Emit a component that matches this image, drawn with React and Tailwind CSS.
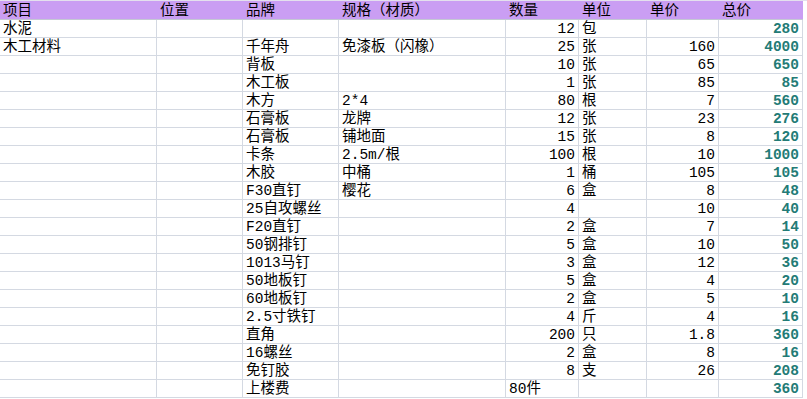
const font = { fontFamily: '"Liberation Mono", "Noto Sans CJK SC", monospace' };

const rows = [
  ["水泥", "", "", "", 12, "包", "", 280],
  ["木工材料", "", "千年舟", "免漆板（闪橡）", 25, "张", 160, 4000],
  ["", "", "背板", "", 10, "张", 65, 650],
  ["", "", "木工板", "", 1, "张", 85, 85],
  ["", "", "木方", "2*4", 80, "根", 7, 560],
  ["", "", "石膏板", "龙牌", 12, "张", 23, 276],
  ["", "", "石膏板", "铺地面", 15, "张", 8, 120],
  ["", "", "卡条", "2.5m/根", 100, "根", 10, 1000],
  ["", "", "木胶", "中桶", 1, "桶", 105, 105],
  ["", "", "F30直钉", "樱花", 6, "盒", 8, 48],
  ["", "", "25自攻螺丝", "", 4, "", 10, 40],
  ["", "", "F20直钉", "", 2, "盒", 7, 14],
  ["", "", "50钢排钉", "", 5, "盒", 10, 50],
  ["", "", "1013马钉", "", 3, "盒", 12, 36],
  ["", "", "50地板钉", "", 5, "盒", 4, 20],
  ["", "", "60地板钉", "", 2, "盒", 5, 10],
  ["", "", "2.5寸铁钉", "", 4, "斤", 4, 16],
  ["", "", "直角", "", 200, "只", 1.8, 360],
  ["", "", "16螺丝", "", 2, "盒", 8, 16],
  ["", "", "免钉胶", "", 8, "支", 26, 208],
  ["", "", "上楼费", "", "80件", "", "", 360],
];

const headers = ["项目", "位置", "品牌", "规格（材质）", "数量", "单位", "单价", "总价"];

const cols = "grid grid-cols-[157px_86px_96px_167px_73px_68px_72px_84px]";

function Cell({ value }) {
  const isNum = typeof value === "number";
  return (
    <div
      className={`h-[18px] border-r border-b border-[#d4d9e2] flex items-end pb-[1px] leading-none overflow-hidden whitespace-nowrap ${
        isNum ? "justify-end pr-[3px]" : "pl-[3px]"
      }`}
    >
      {value}
    </div>
  );
}

export default function App() {
  return (
    <div className="w-[807px] h-[399px] bg-white overflow-hidden text-[14.5px] text-black" style={font}>
      <div className={`${cols} border-t border-[#e4e0ee]`}>
        {headers.map((h, i) => (
          <div
            key={i}
            className="h-[19px] bg-[#ca9ef3] border-b border-[#c4c8d4] flex items-end pb-[1px] pl-[3px] leading-none whitespace-nowrap"
          >
            {h}
          </div>
        ))}
      </div>

      {rows.map((r, ri) => (
        <div key={ri} className={cols}>
          {r.slice(0, 7).map((v, ci) => (
            <Cell key={ci} value={v} />
          ))}
          <div className="h-[18px] border-r border-b border-[#d4d9e2] flex items-end justify-end pb-[1px] pr-[3px] leading-none font-bold text-[#237b76]">
            {r[7]}
          </div>
        </div>
      ))}
    </div>
  );
}
